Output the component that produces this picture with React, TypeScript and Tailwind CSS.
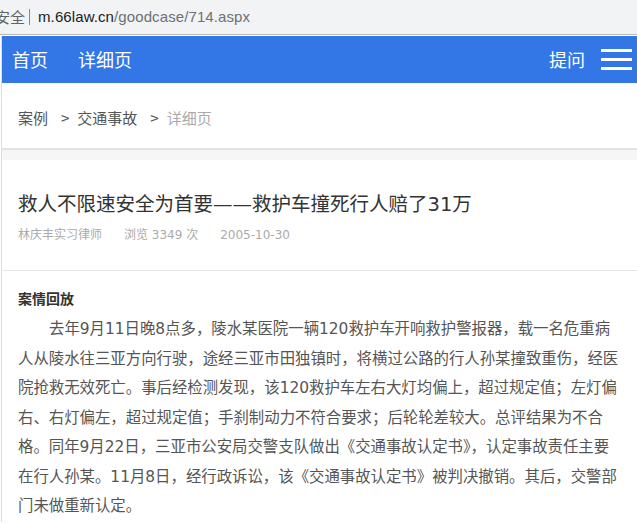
import React from "react";

const cjk = { fontFamily: '"Microsoft YaHei", "Noto Sans CJK SC", "Noto Sans", sans-serif' };
const mixed = { fontFamily: '"DejaVu Sans", "Noto Sans CJK SC", sans-serif' };

// the article wraps at these points in the original page
const lines = [
  "去年9月11日晚8点多，陵水某医院一辆120救护车开响救护警报器，载一名危重病",
  "人从陵水往三亚方向行驶，途经三亚市田独镇时，将横过公路的行人孙某撞致重伤，经医",
  "院抢救无效死亡。事后经检测发现，该120救护车左右大灯均偏上，超过规定值；左灯偏",
  "右、右灯偏左，超过规定值；手刹制动力不符合要求；后轮轮差较大。总评结果为不合",
  "格。同年9月22日，三亚市公安局交警支队做出《交通事故认定书》，认定事故责任主要",
  "在行人孙某。11月8日，经行政诉讼，该《交通事故认定书》被判决撤销。其后，交警部",
  "门未做重新认定。",
];

export default function App() {
  return (
    <div className="w-[637px] h-[524px] overflow-hidden bg-white" style={cjk}>
      {/* browser address bar */}
      <div className="h-[35px] bg-[#f1f3f4] border-b border-[#b9b9b9] flex items-center">
        <span className="-ml-[5px] text-[15px] text-[#5f6368]">安全</span>
        <span className="ml-[4px] w-px h-[16px] bg-[#8a8a8a]" />
        <span className="ml-[8px] text-[15px] tracking-[0.1px]" style={{ fontFamily: '"Liberation Sans", Arial, sans-serif' }}>
          <span className="text-[#202124]">m.66law.cn</span>
          <span className="text-[#6d7175]">/goodcase/714.aspx</span>
        </span>
      </div>
      <div className="h-px bg-white" />

      <div className="ml-px border-l border-[#dedede]">
        {/* nav */}
        <div className="h-[47px] bg-[#3377e6] flex items-center text-white text-[18px] pl-[10px] pr-[4px]">
          <span>首页</span>
          <span className="ml-[30px]">详细页</span>
          <span className="ml-auto">提问</span>
          <div className="ml-[16px] mr-[1px] w-[31px] flex flex-col gap-[6px]">
            <span className="h-[3px] bg-white" />
            <span className="h-[3px] bg-white" />
            <span className="h-[3px] bg-white" />
          </div>
        </div>

        {/* breadcrumb */}
        <div className="h-[67px] bg-white border-b-2 border-[#e2e2e2] flex items-center pt-[6px] pl-[16px] text-[15px] text-[#555]">
          <span>案例</span>
          <span className="ml-[13px] mr-[8px]">&gt;</span>
          <span>交通事故</span>
          <span className="ml-[13px] mr-[8px]">&gt;</span>
          <span className="text-[#aaa]">详细页</span>
        </div>
        <div className="h-[10px] bg-[#f6f6f6]" />

        {/* title */}
        <div className="bg-white border-b border-[#e6e6e6] pl-[16px] pt-[30px] h-[111px]">
          <h1 className="text-[19.5px] leading-[30px] text-[#333]" style={mixed}>
            救人不限速安全为首要——救护车撞死行人赔了31万
          </h1>
          <div className="mt-[5px] flex gap-[22px] text-[12px] leading-[20px] text-[#aaa]" style={mixed}>
            <span>林庆丰实习律师</span>
            <span>浏览 3349 次</span>
            <span>2005-10-30</span>
          </div>
        </div>

        {/* content */}
        <div className="bg-white px-[16px] pt-[17px]">
          <h2 className="text-[14px] font-bold text-[#333] leading-[20px]">案情回放</h2>
          <div className="mt-[7px] text-[15.4px] leading-[29.5px] text-[#555]" style={mixed}>
            {lines.map((l, i) => (
              <div key={i} className={i === 0 ? "whitespace-nowrap pl-[31px]" : "whitespace-nowrap"}>
                {l}
              </div>
            ))}
          </div>
        </div>
      </div>
    </div>
  );
}
